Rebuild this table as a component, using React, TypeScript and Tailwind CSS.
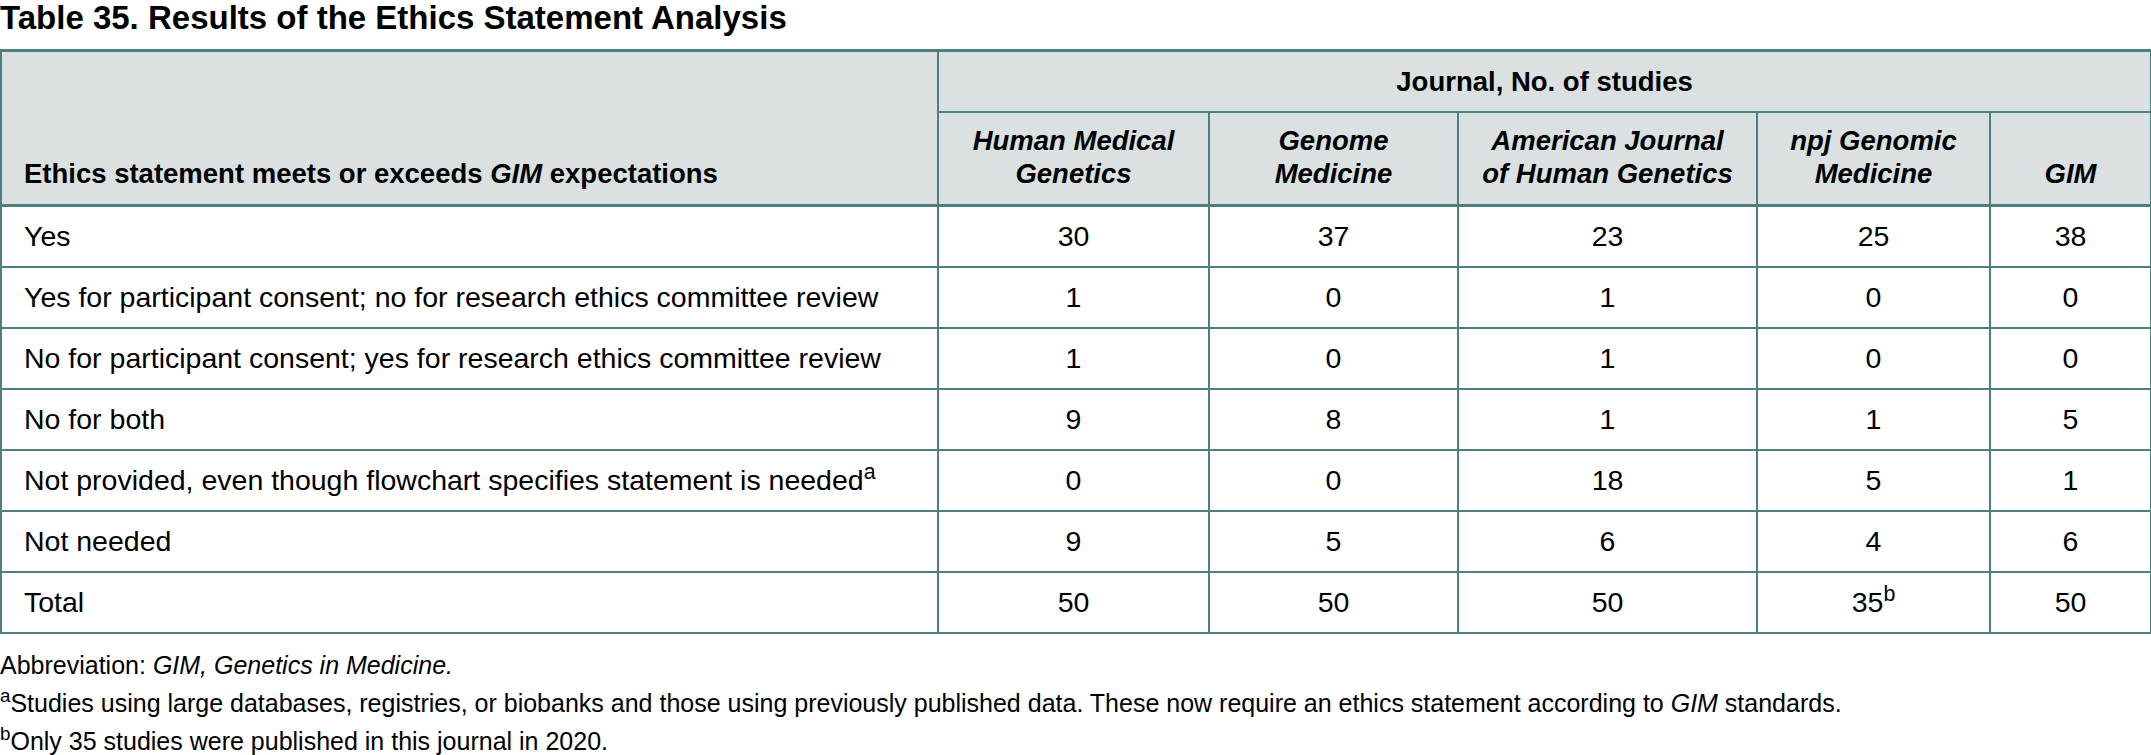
import React from "react";

const rows: { label: React.ReactNode; vals: React.ReactNode[] }[] = [
  { label: "Yes", vals: ["30", "37", "23", "25", "38"] },
  { label: "Yes for participant consent; no for research ethics committee review", vals: ["1", "0", "1", "0", "0"] },
  { label: "No for participant consent; yes for research ethics committee review", vals: ["1", "0", "1", "0", "0"] },
  { label: "No for both", vals: ["9", "8", "1", "1", "5"] },
  {
    label: (
      <>
        Not provided, even though flowchart specifies statement is needed<sup>a</sup>
      </>
    ),
    vals: ["0", "0", "18", "5", "1"],
  },
  { label: "Not needed", vals: ["9", "5", "6", "4", "6"] },
  {
    label: "Total",
    vals: [
      "50",
      "50",
      "50",
      <>
        35<sup>b</sup>
      </>,
      "50",
    ],
  },
];

const journals: React.ReactNode[] = [
  <>Human Medical<br />Genetics</>,
  <>Genome<br />Medicine</>,
  <>American Journal<br />of Human Genetics</>,
  <>npj Genomic<br />Medicine</>,
  <>GIM</>,
];

export default function App() {
  return (
    <div className="w-[2151px] h-[755px] overflow-hidden bg-white text-black font-['Liberation_Sans',Arial,sans-serif]">
      <h1 className="text-[33px] font-bold leading-none pt-[1px] h-[49px]">
        Table 35. Results of the Ethics Statement Analysis
      </h1>
      <table className="table-fixed border-collapse w-[2150px] border-2 border-t-[3px] border-[#4d7f7e] text-[28.5px] leading-[33px]">
        <colgroup>
          <col className="w-[937px]" />
          <col className="w-[271px]" />
          <col className="w-[249px]" />
          <col className="w-[299px]" />
          <col className="w-[233px]" />
          <col className="w-[161px]" />
        </colgroup>
        <thead className="bg-[#dbe1e1] font-bold text-[27.5px]">
          <tr className="h-[61px]">
            <th
              rowSpan={2}
              className="border-2 border-t-[3px] border-b-[3px] border-[#4d7f7e] text-left align-bottom pl-[22px] pb-[14px] font-bold"
            >
              Ethics statement meets or exceeds <i>GIM</i> expectations
            </th>
            <th colSpan={5} className="border-2 border-t-[3px] border-[#4d7f7e] text-center align-middle font-bold">
              Journal, No. of studies
            </th>
          </tr>
          <tr className="h-[94px]">
            {journals.map((j, i) => (
              <th
                key={i}
                className="border-2 border-b-[3px] border-[#4d7f7e] text-center align-bottom pb-[14px] italic font-bold"
              >
                {j}
              </th>
            ))}
          </tr>
        </thead>
        <tbody>
          {rows.map((r, i) => (
            <tr key={i} className="h-[61px]">
              <td className="border-2 border-[#4d7f7e] pl-[22px] align-middle">{r.label}</td>
              {r.vals.map((v, k) => (
                <td key={k} className="border-2 border-[#4d7f7e] text-center align-middle">
                  {v}
                </td>
              ))}
            </tr>
          ))}
        </tbody>
      </table>
      <div className="pt-[12px] text-[25px] leading-[38px]">
        <p>
          Abbreviation: <i>GIM, Genetics in Medicine.</i>
        </p>
        <p>
          <sup>a</sup>Studies using large databases, registries, or biobanks and those using previously published data. These now require an ethics statement according to <i>GIM</i> standards.
        </p>
        <p>
          <sup>b</sup>Only 35 studies were published in this journal in 2020.
        </p>
      </div>
    </div>
  );
}
